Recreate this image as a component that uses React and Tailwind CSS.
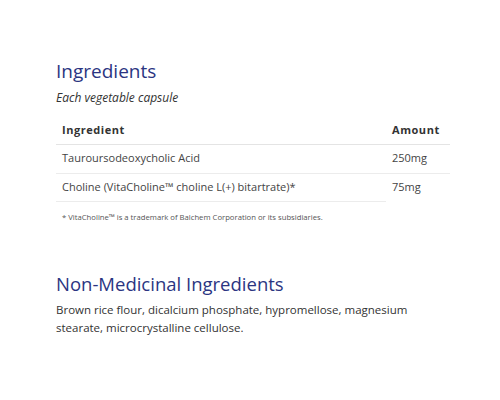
export default function App() {
  return (
    <div className="w-[500px] h-[400px] bg-white overflow-hidden" style={{ fontFamily: '"Open Sans", sans-serif' }}>
      <div className="pl-[56px] pr-[50px] pt-[58px]">
        <h2 className="text-[19px] leading-[26px] text-[#2b3582]">Ingredients</h2>
        <p className="mt-[6px] text-[12px] leading-[16px] italic text-[#333]">Each vegetable capsule</p>
        <table className="mt-[10px] w-[394px] border-collapse text-[11px] text-[#444]">
          <thead>
            <tr className="border-b border-[#e4e4e4]">
              <th className="text-left font-bold tracking-[0.05em] text-[#333] pl-[6px] h-[28px] w-[330px]">Ingredient</th>
              <th className="text-left font-bold tracking-[0.05em] text-[#333] pl-[6px]">Amount</th>
            </tr>
          </thead>
          <tbody>
            <tr className="border-b border-[#ececec]">
              <td className="pl-[6px] h-[29px]">Tauroursodeoxycholic Acid</td>
              <td className="pl-[6px]">250mg</td>
            </tr>
            <tr>
              <td className="pl-[6px] h-[28px] border-b border-[#ececec]">Choline (VitaCholine™ choline L(+) bitartrate)*</td>
              <td className="pl-[6px]">75mg</td>
            </tr>
          </tbody>
        </table>
        <p className="mt-[9px] pl-[6px] text-[7.7px] leading-[12px] text-[#555]">* VitaCholine™ is a trademark of Balchem Corporation or its subsidiaries.</p>
        <h2 className="mt-[48px] text-[18.5px] leading-[26px] text-[#2b3582]">Non-Medicinal Ingredients</h2>
        <p className="mt-[4px] text-[11.5px] leading-[18px] text-[#333]">Brown rice flour, dicalcium phosphate, hypromellose, magnesium stearate, microcrystalline cellulose.</p>
      </div>
    </div>
  );
}
